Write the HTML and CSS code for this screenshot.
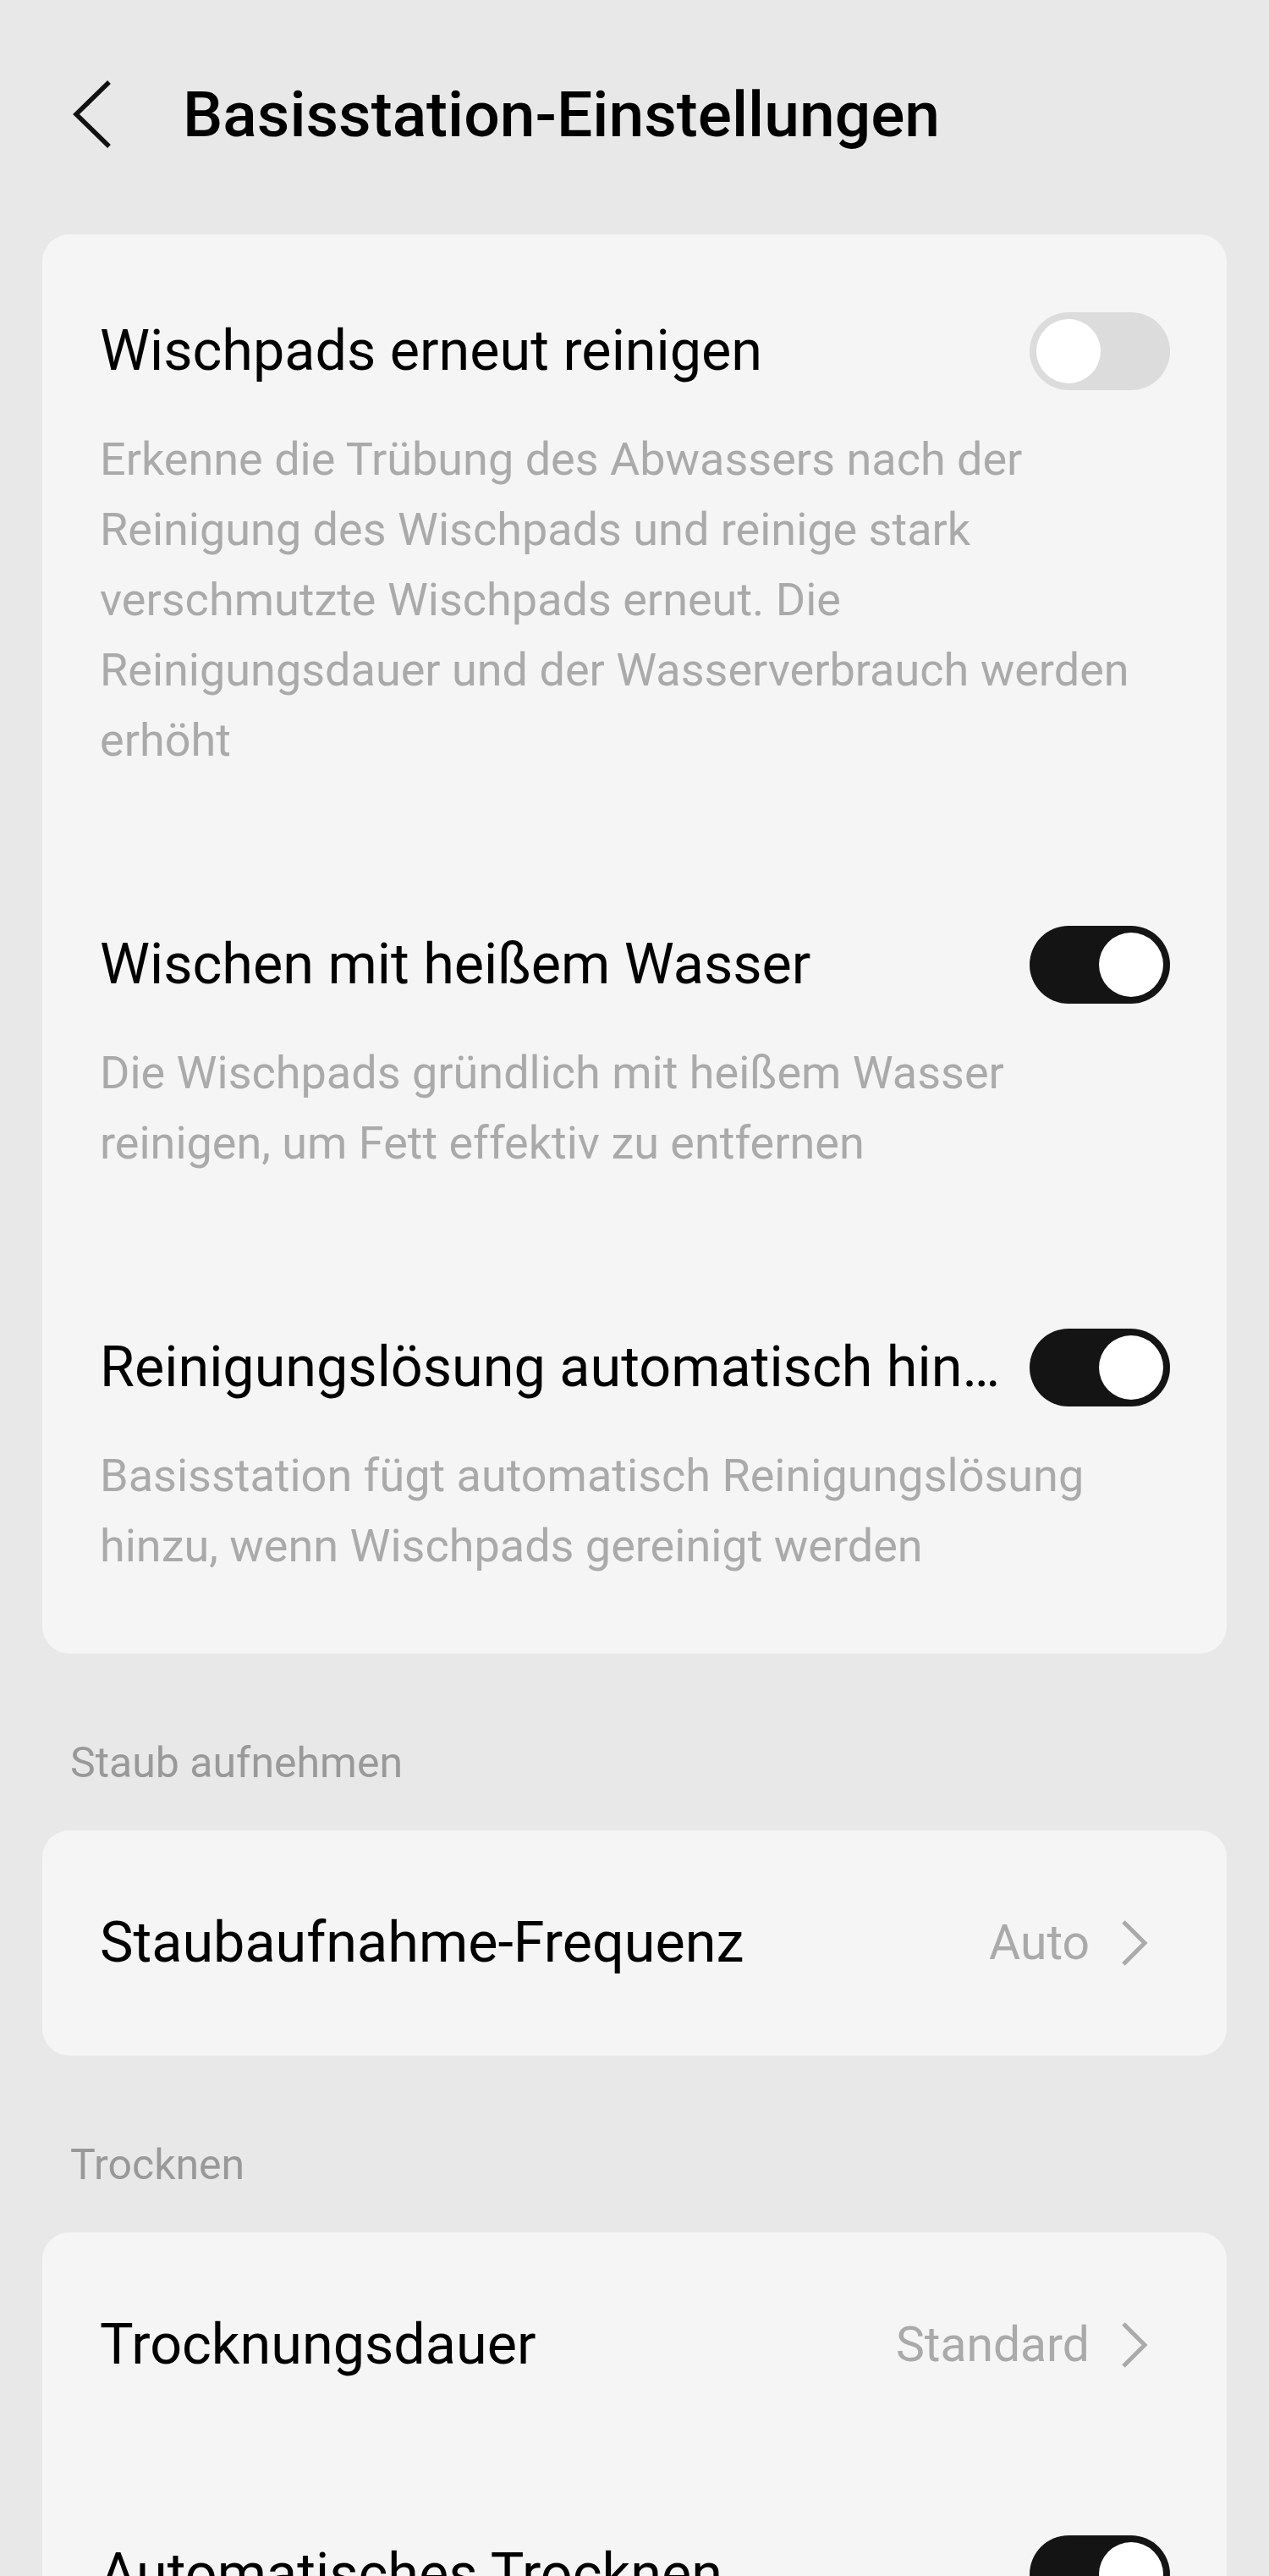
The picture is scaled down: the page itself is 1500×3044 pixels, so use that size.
FILE: index.html
```html
<!DOCTYPE html>
<html lang="de">
<head>
<meta charset="utf-8">
<title>Basisstation-Einstellungen</title>
<link rel="stylesheet" href="styles.css">
</head>
<body>
<header class="header">
  <svg class="back" width="48" height="82" viewBox="0 0 48 82" aria-hidden="true">
    <path d="M44 3 L5 41 L44 79" fill="none" stroke="#111" stroke-width="5.5"/>
  </svg>
  <h1 class="page-title">Basisstation-Einstellungen</h1>
</header>
<main class="content">
  <section class="card">
    <div class="item">
      <div class="row">
        <span class="label">Wischpads erneut reinigen</span>
        <span class="toggle"></span>
      </div>
      <p class="desc">Erkenne die Trübung des Abwassers nach der Reinigung des Wischpads und reinige stark verschmutzte Wischpads erneut. Die Reinigungsdauer und der Wasserverbrauch werden erhöht</p>
    </div>
    <div class="item">
      <div class="row">
        <span class="label">Wischen mit heißem Wasser</span>
        <span class="toggle on"></span>
      </div>
      <p class="desc">Die Wischpads gründlich mit heißem Wasser reinigen, um Fett effektiv zu entfernen</p>
    </div>
    <div class="item">
      <div class="row">
        <span class="label">Reinigungslösung automatisch hinzufügen</span>
        <span class="toggle on"></span>
      </div>
      <p class="desc">Basisstation fügt automatisch Reinigungslösung hinzu, wenn Wischpads gereinigt werden</p>
    </div>
  </section>

  <h2 class="section-label">Staub aufnehmen</h2>
  <section class="card">
    <div class="nav-item">
      <span class="label">Staubaufnahme-Frequenz</span>
      <span class="value">Auto
        <svg class="chev" width="32" height="54" viewBox="0 0 32 54" aria-hidden="true">
          <path d="M3 2 L28 27 L3 52" fill="none" stroke="#aaaaaa" stroke-width="5"/>
        </svg>
      </span>
    </div>
  </section>

  <h2 class="section-label">Trocknen</h2>
  <section class="card">
    <div class="nav-item">
      <span class="label">Trocknungsdauer</span>
      <span class="value">Standard
        <svg class="chev" width="32" height="54" viewBox="0 0 32 54" aria-hidden="true">
          <path d="M3 2 L28 27 L3 52" fill="none" stroke="#aaaaaa" stroke-width="5"/>
        </svg>
      </span>
    </div>
    <div class="item">
      <div class="row">
        <span class="label">Automatisches Trocknen</span>
        <span class="toggle on"></span>
      </div>
    </div>
  </section>
</main>
</body>
</html>
```

FILE: styles.css
```css
* {
  box-sizing: border-box;
}

html, body {
  margin: 0;
  padding: 0;
}

body {
  background: #e8e8e8;
  font-family: Roboto, "Noto Sans", "Liberation Sans", sans-serif;
  color: #000;
}

.header {
  height: 270px;
  display: flex;
  align-items: center;
  padding-left: 85px;
}

.back {
  flex: none;
  display: block;
}

.page-title {
  margin: 0 0 0 83px;
  font-size: 75px;
  font-weight: 500;
  line-height: 1.2;
  color: #000;
}

.content {
  padding: 7px 50px 0;
}

.card {
  background: #f5f5f5;
  border-radius: 32px;
}

.item {
  padding: 92px 67px 86px 68px;
}

.row {
  display: flex;
  align-items: center;
  min-height: 92px;
}

.label {
  flex: 1;
  min-width: 0;
  font-size: 66.5px;
  line-height: 1.2;
  white-space: nowrap;
  overflow: hidden;
  text-overflow: ellipsis;
  margin-right: 20px;
}

.toggle {
  flex: none;
  position: relative;
  width: 166px;
  height: 92px;
  border-radius: 46px;
  background: #dcdcdc;
}

.toggle::after {
  content: "";
  position: absolute;
  top: 8px;
  left: 8px;
  width: 76px;
  height: 76px;
  border-radius: 50%;
  background: #fff;
}

.toggle.on {
  background: #141414;
}

.toggle.on::after {
  left: 82px;
}

.desc {
  margin: 40px 0 0;
  font-size: 54px;
  line-height: 83px;
  color: #aaaaaa;
}

.nav-item {
  display: flex;
  align-items: center;
  min-height: 266px;
  padding: 0 93px 0 68px;
}

.value {
  flex: none;
  display: flex;
  align-items: center;
  gap: 37px;
  font-size: 57px;
  line-height: 1.2;
  color: #aaaaaa;
}

.chev {
  display: block;
}

.section-label {
  margin: 101px 0 51px 33px;
  font-size: 50px;
  font-weight: 400;
  line-height: 57px;
  color: #999999;
}
```
